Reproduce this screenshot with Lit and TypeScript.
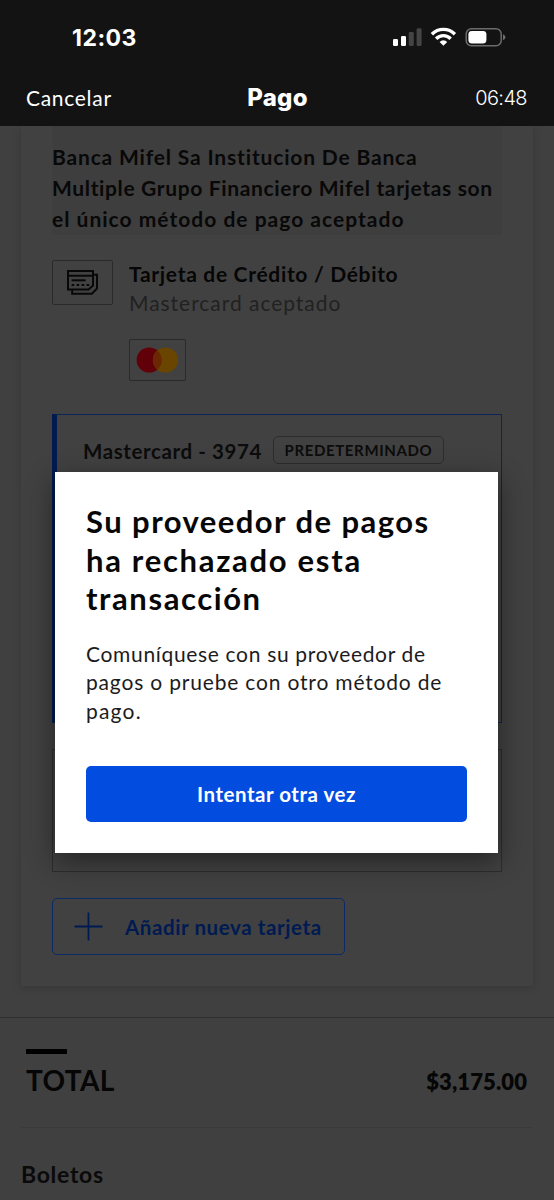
import { LitElement, html, css } from "lit";
import { customElement } from "lit/decorators.js";

@customElement("status-bar")
class StatusBar extends LitElement {
  static styles = css`
    :host { display: flex; justify-content: space-between; align-items: flex-start; height: 72px; box-sizing: border-box; padding: 24px 48px 0 72px; }
    .clock { font: 700 23px/28px Inter, sans-serif; letter-spacing: 0.5px; color: #fff; }
    svg { display: block; }
    .icons { padding-top: 3px; }
  `;
  render() {
    return html`
      <span class="clock">12:03</span>
      <svg class="icons" width="114" height="20" viewBox="0 0 114 20">
        <g fill="#fff">
          <rect x="1" y="12" width="5" height="7" rx="1.3" />
          <rect x="9" y="9" width="5" height="10" rx="1.3" />
        </g>
        <g fill="#444">
          <rect x="16.8" y="5" width="5" height="14" rx="1.3" />
          <rect x="24.6" y="1.2" width="5" height="17.8" rx="1.3" />
        </g>
        <g fill="none" stroke="#fff" stroke-width="3.4">
          <path d="M39.9 7.2 A16.2 16.2 0 0 1 62.9 7.2" />
          <path d="M44.1 11.7 A10.3 10.3 0 0 1 58.7 11.7" />
        </g>
        <path d="M51.4 18.8 L47.6 14.9 A5.4 5.4 0 0 1 55.2 14.9 Z" fill="#fff" />
        <rect x="74.2" y="1.7" width="35" height="17" rx="5.2" fill="none" stroke="#6c6c6c" stroke-width="1.5" />
        <rect x="76.4" y="3.9" width="18" height="12.6" rx="3.4" fill="#fff" />
        <path d="M111 7.2 q2.4 0.8 2.4 3 t-2.4 3 Z" fill="#6c6c6c" />
      </svg>
    `;
  }
}

@customElement("payment-card")
class PaymentCard extends LitElement {
  static styles = css`
    :host { display: block; box-sizing: border-box; margin: 0 21px; height: 860px; padding: 0 31px; background: #414141; box-shadow: 0 2px 8px rgba(0, 0, 0, 0.16); }
    .notice { height: 109px; box-sizing: border-box; padding-top: 15px; background: #3e3e3e; font-weight: 700; font-size: 21px; line-height: 31px; color: #080808; white-space: nowrap; }
    .notice span { display: block; }
    .notice .n1 { letter-spacing: 0.83px; }
    .notice .n2 { letter-spacing: 0.64px; }
    .notice .n3 { letter-spacing: 1.01px; }
    .method { display: flex; gap: 16px; margin-top: 25px; height: 121px; }
    .glyph { width: 61px; height: 45px; box-sizing: border-box; border: 1px solid #2a2a2a; border-radius: 2px; display: grid; place-items: center; }
    .kind { font-size: 21px; line-height: 28px; white-space: nowrap; }
    .kind .name { font-weight: 700; letter-spacing: 0.69px; color: #060606; }
    .kind .accepted { padding-top: 1px; letter-spacing: 0.97px; color: #212121; }
    .brand { margin-top: 22px; width: 57px; height: 42px; box-sizing: border-box; border: 1px solid #2a2a2a; border-radius: 2px; display: grid; place-items: center; }
    svg { display: block; }
    .selected { display: flex; align-items: flex-start; margin-top: 33px; height: 309px; box-sizing: border-box; border: 1px solid #0b2558; border-left: 5px solid #001a50; padding: 21px 0 0 26px; }
    .number { padding-top: 1px; font-weight: 700; font-size: 20.5px; line-height: 28px; letter-spacing: 0.6px; color: #0c0c0c; width: 190px; white-space: nowrap; }
    .badge { height: 28px; width: 171px; box-sizing: border-box; border: 1px solid #2d2d2d; border-radius: 5px; padding-left: 10.5px; font-weight: 700; font-size: 15px; line-height: 26px; letter-spacing: 0.63px; color: #0c0c0c; white-space: nowrap; }
    .other { margin-top: 26px; height: 123px; box-sizing: border-box; border: 1px solid #2d2d2d; }
    .add { display: flex; align-items: center; gap: 22px; margin-top: 26px; width: 293px; height: 57px; box-sizing: border-box; padding: 0 0 0 21px; border: 1px solid #0b2a66; border-radius: 5px; font-weight: 700; font-size: 20.5px; letter-spacing: 0.6px; color: #001a52; white-space: nowrap; }
  `;
  render() {
    return html`
      <div class="notice">
        <span class="n1">Banca Mifel Sa Institucion De Banca</span>
        <span class="n2">Multiple Grupo Financiero Mifel tarjetas son</span>
        <span class="n3">el único método de pago aceptado</span>
      </div>
      <div class="method">
        <div class="glyph">
          <svg width="33" height="27" viewBox="0 0 33 27" fill="none" stroke="#080808" stroke-width="2">
            <path d="M2 2 H27 V16.5 L22.6 20.6 H2 Z M2 6.8 H27" />
            <path d="M27 5.8 H31 V19.5 L25.8 24.8 H6.2 V20.6" />
            <path d="M5.6 11.3 H19.6" />
            <path d="M5.6 16 H23.2" stroke-dasharray="2.6 2.4" />
          </svg>
        </div>
        <div class="kind">
          <div class="name">Tarjeta de Crédito / Débito</div>
          <div class="accepted">Mastercard aceptado</div>
          <div class="brand">
            <svg width="43" height="27" viewBox="0 0 43 27">
              <circle cx="13.2" cy="13" r="12.6" fill="#620009" />
              <circle cx="29.4" cy="13" r="12.6" fill="#694500" />
              <path d="M21.3 3.4 A12.6 12.6 0 0 1 21.3 22.6 A12.6 12.6 0 0 1 21.3 3.4 Z" fill="#6a2702" />
            </svg>
          </div>
        </div>
      </div>
      <div class="selected">
        <span class="number">Mastercard - 3974</span>
        <span class="badge">PREDETERMINADO</span>
      </div>
      <div class="other"></div>
      <div class="add">
        <svg width="29" height="29" viewBox="0 0 29 29" stroke="#001a52" stroke-width="1.8"><path d="M14.5 0.5 V28.5 M0.5 14.5 H28.5" /></svg>
        <span>Añadir nueva tarjeta</span>
      </div>
    `;
  }
}

@customElement("error-dialog")
class ErrorDialog extends LitElement {
  static styles = css`
    :host { display: block; box-sizing: border-box; background: #fff; padding: 30px 31px 31px; box-shadow: 0 8px 26px rgba(0, 0, 0, 0.45); white-space: nowrap; }
    h2 { margin: 0; font-weight: 700; font-size: 31px; line-height: 38.6px; color: #070707; }
    p { margin: 22px 0 0; font-size: 21px; line-height: 28.5px; color: #1c1c1c; }
    span { display: block; }
    .t1 { letter-spacing: 1.45px; }
    .t2 { letter-spacing: 1.7px; }
    .t3 { letter-spacing: 1.58px; }
    .b1 { letter-spacing: 0.67px; }
    .b2 { letter-spacing: 0.82px; }
    .b3 { letter-spacing: 1.2px; }
    button { display: block; margin: 41px 0 0; width: 381px; height: 56px; padding: 0; border: 0; border-radius: 5px; background: #024ddf; color: #fff; font: 700 20.5px/56px Lato, sans-serif; letter-spacing: 0.52px; }
  `;
  render() {
    return html`
      <h2>
        <span class="t1">Su proveedor de pagos</span>
        <span class="t2">ha rechazado esta</span>
        <span class="t3">transacción</span>
      </h2>
      <p>
        <span class="b1">Comuníquese con su proveedor de</span>
        <span class="b2">pagos o pruebe con otro método de</span>
        <span class="b3">pago.</span>
      </p>
      <button>Intentar otra vez</button>
    `;
  }
}

@customElement("app-root")
class AppRoot extends LitElement {
  static styles = css`
    :host { display: block; position: relative; width: 554px; height: 1200px; overflow: hidden; background: #404040; font-family: Lato, sans-serif; }
    header { height: 126px; background: #131313; color: #fff; }
    nav { display: grid; grid-template-columns: 1fr auto 1fr; align-items: center; height: 50px; padding: 0 26px; }
    .cancel { font-size: 21px; letter-spacing: 0.7px; }
    .title { font: 800 24px/30px Inter, sans-serif; letter-spacing: 0.3px; padding: 1px 0 0 1px; }
    .timer { font: 300 20px/30px Inter, sans-serif; letter-spacing: -0.6px; text-align: right; padding: 2px 1px 0 0; }
    .total { margin-top: 31px; height: 110px; box-sizing: border-box; border-top: 1px solid #2e2e2e; padding: 31px 27px 0 26px; }
    .mark { width: 41px; height: 5px; background: #000; }
    .sum { display: flex; justify-content: space-between; align-items: baseline; margin-top: 8px; font-weight: 700; font-size: 28px; line-height: 36px; letter-spacing: 0.35px; color: #060606; }
    .amount { font-weight: 800; font-size: 22px; line-height: 32px; letter-spacing: 0.1px; transform: translateY(-1px); }
    .tickets { margin: 0 21px; border-top: 1px solid #3a3a3a; padding-top: 30px; font-weight: 700; font-size: 23px; line-height: 32px; letter-spacing: 0.7px; color: #0a0a0a; }
    error-dialog { position: absolute; left: 55px; top: 472px; width: 443px; height: 381px; }
  `;
  render() {
    return html`
      <header>
        <status-bar></status-bar>
        <nav>
          <span class="cancel">Cancelar</span>
          <span class="title">Pago</span>
          <span class="timer">06:48</span>
        </nav>
      </header>
      <payment-card></payment-card>
      <section class="total">
        <div class="mark"></div>
        <div class="sum"><span>TOTAL</span><span class="amount">$3,175.00</span></div>
      </section>
      <section class="tickets">Boletos</section>
      <error-dialog></error-dialog>
    `;
  }
}
